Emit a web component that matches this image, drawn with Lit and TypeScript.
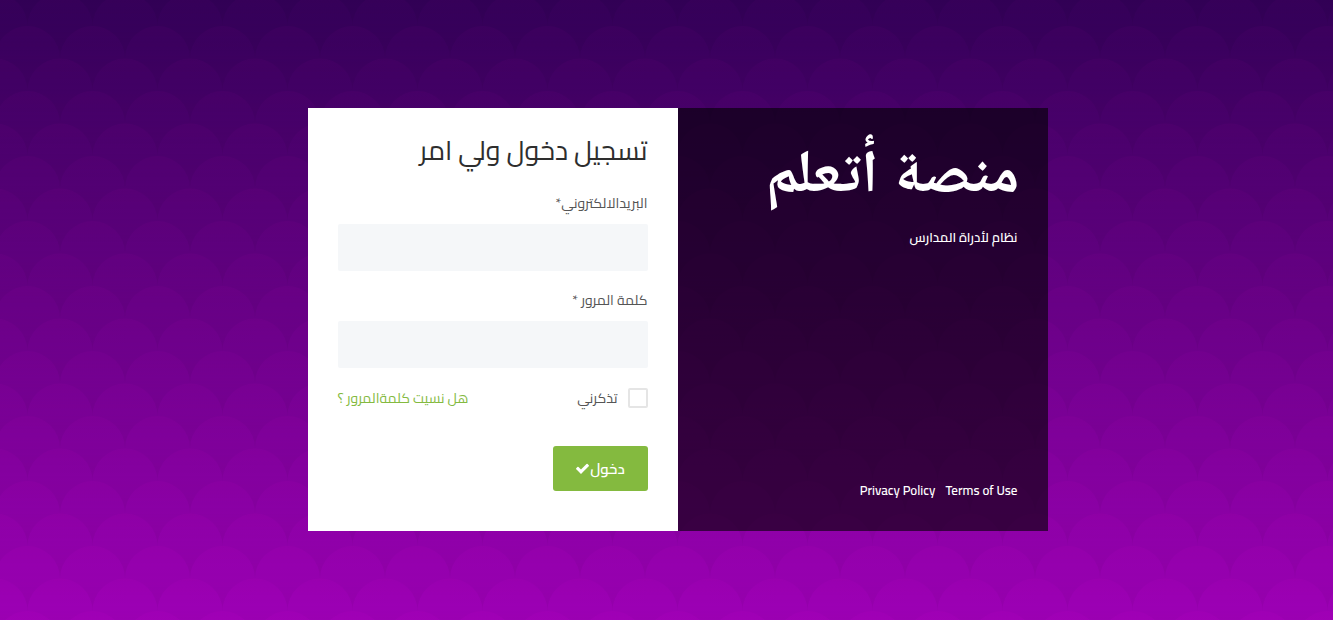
import { LitElement, html, css } from "lit";
import { customElement, state } from "lit/decorators.js";

@customElement("scale-backdrop")
class ScaleBackdrop extends LitElement {
  static styles = css`
    :host {
      display: block;
    }
    .art {
      display: block;
      width: 100%;
      height: 100%;
    }
  `;

  render() {
    return html`
      <svg class="art" aria-hidden="true">
        <defs>
          <linearGradient id="sky" x1="0" y1="0" x2="0" y2="1">
            <stop offset="0" stop-color="#320057" />
            <stop offset="1" stop-color="#9e00b6" />
          </linearGradient>
          <linearGradient id="shade" x1="0" y1="0" x2="0" y2="1">
            <stop offset="0" stop-color="#ff00b0" stop-opacity="0.028" />
            <stop offset="0.4" stop-color="#ff00b0" stop-opacity="0" />
            <stop offset="0.4" stop-color="#000" stop-opacity="0" />
            <stop offset="1" stop-color="#000" stop-opacity="0.055" />
          </linearGradient>
          <path
            id="scale"
            fill="url(#shade)"
            d="M0 32.5A32.5 32.5 0 0 1 65 32.5A32.5 32.5 0 0 0 32.5 65A32.5 32.5 0 0 0 0 32.5Z"
          />
          <pattern id="scales" width="65" height="65" x="-5" y="26" patternUnits="userSpaceOnUse">
            <use href="#scale" />
            <use href="#scale" x="-32.5" y="-32.5" />
            <use href="#scale" x="32.5" y="-32.5" />
            <use href="#scale" x="-32.5" y="32.5" />
            <use href="#scale" x="32.5" y="32.5" />
          </pattern>
        </defs>
        <rect width="100%" height="100%" fill="url(#sky)" />
        <rect width="100%" height="100%" fill="url(#scales)" />
      </svg>
    `;
  }
}

@customElement("app-root")
class AppRoot extends LitElement {
  static styles = css`
    :host {
      display: grid;
      min-height: 100vh;
      font-family: Cairo, "DejaVu Sans", sans-serif;
      font-size: 14px;
      line-height: 20px;
      color: #555;
    }
    *,
    *::before {
      box-sizing: border-box;
    }
    .backdrop,
    .page {
      grid-area: 1 / 1;
    }
    .page {
      position: relative;
      display: flex;
      justify-content: center;
      align-items: flex-start;
      padding: 108px 0 88px 22px;
    }
    .card {
      display: grid;
      grid-template-columns: 1fr 1fr;
      width: 100%;
      max-width: 740px;
    }
    .brand {
      display: flex;
      flex-direction: column;
      padding: 24px 28px 31px;
      background: rgba(0, 0, 0, 0.6);
      color: #fff;
    }
    .logo {
      margin: 0;
      font-family: Arial, "Noto Naskh Arabic", Amiri, "DejaVu Sans", sans-serif;
      font-size: 60px;
      font-weight: 700;
      line-height: 80px;
      white-space: nowrap;
    }
    .tagline {
      margin: 15px 2px 0;
      font-size: 13px;
      font-weight: 600;
    }
    .legal {
      display: flex;
      gap: 10px;
      margin: auto 2px 0;
      font-size: 13px;
      font-weight: 600;
    }
    .legal a {
      color: #fff;
      text-decoration: none;
    }
    .form {
      display: flex;
      flex-direction: column;
      padding: 26px 30px 40px;
      background: #fff;
    }
    .title {
      margin: 0 0 8px;
      font-size: 27px;
      font-weight: 400;
      line-height: 32px;
      color: #2e2e2e;
    }
    .label {
      margin: 19px 0 11px;
    }
    .field {
      width: 100%;
      height: 47px;
      margin: 0;
      padding: 10px 14px;
      border: 0;
      border-radius: 2px;
      background: #f5f7f9;
      font: inherit;
      color: inherit;
      outline: none;
    }
    .row {
      display: flex;
      justify-content: space-between;
      align-items: center;
      margin: 20px 0 38px;
    }
    .remember {
      display: flex;
      align-items: center;
      gap: 10px;
    }
    .tick {
      appearance: none;
      width: 20px;
      height: 20px;
      margin: 0;
      border: 2px solid #e5e5e5;
      border-radius: 2px;
      background: #fff;
    }
    .tick:checked {
      background: #84ba3f;
      border-color: #84ba3f;
    }
    .forgot {
      color: #84ba3f;
      text-decoration: none;
    }
    .submit {
      display: flex;
      align-items: center;
      justify-content: center;
      align-self: flex-start;
      width: 95px;
      height: 45px;
      padding: 0;
      border: 0;
      border-radius: 3px;
      background: #84ba3f;
      color: #fff;
      font: inherit;
      font-size: 15px;
      font-weight: 600;
      cursor: pointer;
    }
    .check {
      width: 15px;
      height: 15px;
      fill: currentColor;
    }
  `;

  @state() private remember = false;

  render() {
    return html`
      <scale-backdrop class="backdrop"></scale-backdrop>
      <main class="page" dir="rtl" lang="ar">
        <div class="card">
          <section class="brand">
            <h1 class="logo">منصة أتعلم</h1>
            <p class="tagline">نظام لأدراة المدارس</p>
            <nav class="legal">
              <a href="#terms">Terms of Use</a>
              <a href="#privacy">Privacy Policy</a>
            </nav>
          </section>
          <form class="form" @submit=${(e: Event) => e.preventDefault()}>
            <h2 class="title">تسجيل دخول ولي امر</h2>
            <label class="label" for="email">البريدالالكتروني*</label>
            <input class="field" id="email" type="email" />
            <label class="label" for="password">كلمة المرور *</label>
            <input class="field" id="password" type="password" />
            <div class="row">
              <label class="remember">
                <input
                  class="tick"
                  type="checkbox"
                  .checked=${this.remember}
                  @change=${(e: Event) => (this.remember = (e.target as HTMLInputElement).checked)}
                />
                تذكرني
              </label>
              <a class="forgot" href="#forgot">هل نسيت كلمةالمرور ؟</a>
            </div>
            <button class="submit" type="submit">
              <span>دخول</span>
              <svg class="check" viewBox="0 0 1792 1792" aria-hidden="true">
                <path
                  d="M1671 566q0 40-28 68l-724 724-136 136q-28 28-68 28t-68-28l-136-136-362-362q-28-28-28-68t28-68l136-136q28-28 68-28t68 28l294 295 656-657q28-28 68-28t68 28l136 136q28 28 28 68z"
                />
              </svg>
            </button>
          </form>
        </div>
      </main>
    `;
  }
}
